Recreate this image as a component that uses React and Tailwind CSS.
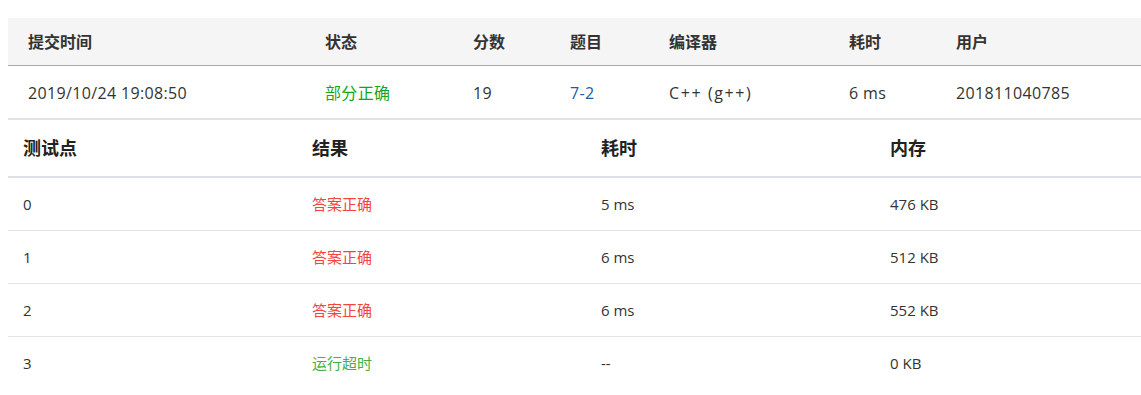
const font = { fontFamily: '"Segoe UI", "Open Sans", "Noto Sans CJK SC", sans-serif' };

const topCols = [
  { label: "提交时间", w: "w-[297px]" },
  { label: "状态", w: "w-[148px]" },
  { label: "分数", w: "w-[97px]" },
  { label: "题目", w: "w-[99px]" },
  { label: "编译器", w: "w-[180px]" },
  { label: "耗时", w: "w-[107px]" },
  { label: "用户", w: "w-[205px]" },
];

const cases = [
  { id: "0", result: "答案正确", ok: true, time: "5 ms", mem: "476 KB" },
  { id: "1", result: "答案正确", ok: true, time: "6 ms", mem: "512 KB" },
  { id: "2", result: "答案正确", ok: true, time: "6 ms", mem: "552 KB" },
  { id: "3", result: "运行超时", ok: false, time: "--", mem: "0 KB" },
];

function Cell({ w, className = "", children }) {
  return <div className={`${w} shrink-0 px-5 ${className}`}>{children}</div>;
}

export default function App() {
  return (
    <div className="w-[1141px] h-[395px] overflow-hidden bg-white pl-2 pt-[18px] text-[#333]" style={font}>
      <div className="w-[1133px]">
        <div className="flex h-[48px] items-center bg-[#f5f5f5] border-b border-[#aaaaaa] text-[16px] font-semibold">
          {topCols.map((c) => (
            <Cell key={c.label} w={c.w}>{c.label}</Cell>
          ))}
        </div>
        <div className="flex h-[54px] items-center border-b-2 border-[#e1e2e6] pt-[2px] text-[16px] tracking-[0.35px]">
          <Cell w="w-[297px]">2019/10/24 19:08:50</Cell>
          <Cell w="w-[148px]" className="text-[#16a716]">部分正确</Cell>
          <Cell w="w-[97px]">19</Cell>
          <Cell w="w-[99px]" className="text-[#1c5aa6]">7-2</Cell>
          <Cell w="w-[180px]" className="tracking-[1.6px]">C++ (g++)</Cell>
          <Cell w="w-[107px]">6 ms</Cell>
          <Cell w="w-[205px]">201811040785</Cell>
        </div>
      </div>

      <div className="w-[1156px]">
        <div className="flex h-[58px] items-center border-b-2 border-[#dcdfe6] text-[18px] font-bold text-[#222]">
          {["测试点", "结果", "耗时", "内存"].map((h) => (
            <div key={h} className="w-[289px] shrink-0 px-[15px]">{h}</div>
          ))}
        </div>
        {cases.map((c, i) => (
          <div
            key={c.id}
            className={`flex h-[53px] items-center text-[15px] ${i < cases.length - 1 ? "border-b border-[#e4e4e8]" : ""}`}
          >
            <div className="w-[289px] shrink-0 px-[15px]">{c.id}</div>
            <div className={`w-[289px] shrink-0 px-[15px] ${c.ok ? "text-[#f5443a]" : "text-[#46b046]"}`}>{c.result}</div>
            <div className="w-[289px] shrink-0 px-[15px]">{c.time}</div>
            <div className="w-[289px] shrink-0 px-[15px]">{c.mem}</div>
          </div>
        ))}
      </div>
    </div>
  );
}
